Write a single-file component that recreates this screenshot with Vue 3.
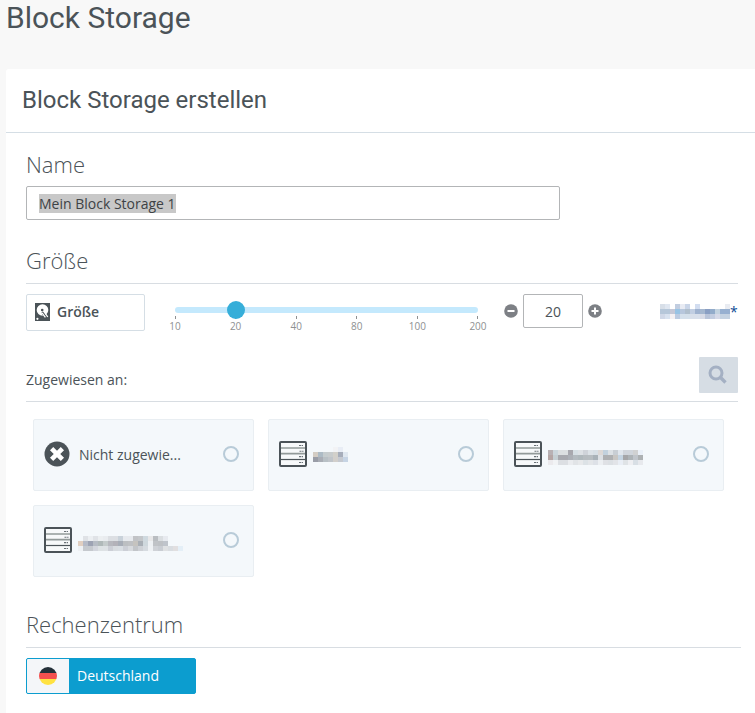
<script setup>
import { ref, computed } from 'vue'

const name = ref('Mein Block Storage 1')
const sizes = [10, 20, 40, 80, 100, 200]
const step = ref(1)
const size = computed(() => sizes[step.value])
const assigned = ref('')

function move(delta) {
  step.value = Math.min(sizes.length - 1, Math.max(0, Number(step.value) + delta))
}

// Masked labels: rows of 5px tiles, '-' leaves a tile empty.
function tiles(rows) {
  return rows.flatMap((row, y) =>
    row.split(' ').map((c, x) => ({ x: x * 5, y: y * 5, fill: '#' + c, empty: c === '-' }))
  ).filter((t) => !t.empty)
}

const price = tiles([
  'd8dfe8 e0e7f1 - c1cde0 e8ebf3 c9d5e8 - d2ddf0 - - - - - e9ecf2',
  'b6c7d9 b6c7d9 c5c8d7 98c3e4 b7c7dc b0bfcd c1cee2 9fb2cf a5b7cf 8a9fc3 93acca c3d3e0 97b0d0 97b0d0',
  'd0d8e7 d8e2ef f5f1f3 bccbe1 d4e0eb d4e0eb d8dfea d8dfeb d8dbe6 b9c4d9 c3cde0 d6dae8 c4d2e1 c4d2e1'
])

const servers = [
  {
    id: 's1',
    width: 35,
    height: 20,
    tiles: tiles([
      '- - - - f2f3f5 e8edf5 -',
      'd4cdc4 adbbc5 c5ccce c8cccd d2d0ca a6adba dfe7ef',
      '999da7 a9adb5 b8c0c5 c0c5ca d2cfcb c5c9d0 c6d4e4'
    ])
  },
  {
    id: 's2',
    width: 100,
    height: 15,
    tiles: tiles([
      'b8b1b4 cbd6dc dcdfe0 dcdfe0 a8a8ae d6dfe4 dde1e5 cfd3d9 dce2e7 d7dfe5 dcd8d6 c2d1dd dce1e5 c8ced4 e0e6ed d0d5dc d0d5dc d0d1d2 eaf0f8',
      'b5a6a5 c5cfd3 a8a9ae a8a9ae acb0b6 b4bbc0 afb8bc b6bcc0 b7bdc1 a9b2b8 dce0e4 aeb0b2 aeb0b2 c8c6c3 c4d4e2 a5a6a9 adb3b7 c0c5cb adb1b3 -',
      'ebeaed f1f3f5 dcdfe3 dcdfe3 eaecef e1e4e7 e7e9eb dce2e6 e3e6e9 dde1e7 eceff2 dfe1e5 dce0e4 e2e4e8 e9eef5 dfe3e6 eeeff2 d8dfe5 e7e9ed -'
    ])
  },
  {
    id: 's3',
    width: 105,
    height: 15,
    tiles: tiles([
      '- dfe2e6 eceff2 e0e3e7 eceff1 e9ecef dcdfe3 dcdfe3 c9d2da e7eaee e7eaee c1c3c6 c4c7ca cfd9df e8e8e9 b9bdc1 dadee1 e7eaef - - -',
      'e1cfc1 b6bbc7 9da3b3 b6bcc4 b0b9b9 c4cbcb b7b8be b3b2b9 a7adb7 bcbfc2 bfc1c4 c5c3bf a9afb6 cfd8dd eef1f4 c0c3c7 bec1c5 bfc4cb - - -',
      'eef1f4 c5c9ce c5c9ce d3d6dd dde2e4 dee2e5 cccfd6 d8dce0 d9dee3 cccfd6 d7dade c2c5c9 ced1d6 d6dbe0 eff2f5 cfd2d7 c9cdd3 dfe1e3 d9dde1 e1dfe0 e4eff7'
    ])
  }
]
</script>

<template>
  <div class="page">
    <h1>Block Storage</h1>
    <main class="panel">
      <header class="panel-head"><h2>Block Storage erstellen</h2></header>
      <form class="content" @submit.prevent>
        <section>
          <h3><label for="storage-name">Name</label></h3>
          <div class="name-box">
            <span class="selected-wrap">
              <input id="storage-name" v-model="name" class="name-input" type="text" />
            </span>
          </div>
        </section>

        <section class="size-section">
          <h3 class="ruled">Größe</h3>
          <div class="size-row">
            <label class="size-label" for="size-range">
              <svg width="15" height="18" viewBox="0 0 15 18" aria-hidden="true">
                <path fill="#4b5358" d="M0 0h15v18H0z" />
                <circle cx="7.5" cy="7" r="5.8" fill="#fff" />
                <circle cx="7.2" cy="7" r="1.3" fill="#4b5358" />
                <path fill="#4b5358" d="M6.6 9l1.4-.4 4 5.2-2.3 1.6-2.6-4z" />
                <path stroke="#fff" stroke-width="1.3" d="M7 9.8l3.4 4.6M10.4 10.6l2.4 3.4" />
                <circle cx="2.4" cy="15.8" r="1.1" fill="#fff" />
              </svg>
              <span>Größe</span>
            </label>
            <div class="slider">
              <div class="track">
                <input id="size-range" v-model.number="step" type="range" min="0" max="5" step="1" />
              </div>
              <ul class="ticks">
                <li v-for="s in sizes" :key="s">{{ s }}</li>
              </ul>
            </div>
            <div class="stepper">
              <button type="button" aria-label="Kleiner" @click="move(-1)">
                <svg width="14" height="14" viewBox="0 0 14 14"><circle cx="7" cy="7" r="6.8" fill="#7d8085" /><path stroke="#fff" stroke-width="2" d="M3.5 7h7" /></svg>
              </button>
              <input class="amount" type="text" :value="size" aria-label="Größe in GB" readonly />
              <button type="button" aria-label="Größer" @click="move(1)">
                <svg width="14" height="14" viewBox="0 0 14 14"><circle cx="7" cy="7" r="6.8" fill="#7d8085" /><path stroke="#fff" stroke-width="2" d="M3.5 7h7M7 3.5v7" /></svg>
              </button>
            </div>
            <div class="price">
              <svg width="70" height="15" viewBox="0 0 70 15" shape-rendering="crispEdges" aria-hidden="true">
                <rect v-for="(t, i) in price" :key="i" :x="t.x" :y="t.y" width="5" height="5" :fill="t.fill" />
              </svg>
              <span>*</span>
            </div>
          </div>
        </section>

        <section>
          <div class="assign-head">
            <p>Zugewiesen an:</p>
            <button class="search" type="button" aria-label="Suchen">
              <svg width="20" height="20" viewBox="0 0 20 20" fill="none" stroke="#a4b0c3">
                <circle cx="8" cy="8" r="6" stroke-width="3" />
                <path d="M12.3 12.3l5.2 5.2" stroke-width="3.4" />
              </svg>
            </button>
          </div>
          <div class="cards">
            <label class="card">
              <svg width="26" height="26" viewBox="0 0 26 26" aria-hidden="true">
                <circle cx="13" cy="13" r="12.5" fill="#4b5358" />
                <path stroke="#fff" stroke-width="4.6" d="M7.6 7.6l10.8 10.8M18.4 7.6L7.6 18.4" />
              </svg>
              <span class="card-text">Nicht zugewie...</span>
              <input v-model="assigned" type="radio" name="server" value="none" />
            </label>
            <label v-for="s in servers" :key="s.id" class="card">
              <svg class="server-icon" width="28" height="26" viewBox="0 0 28 26" aria-hidden="true">
                <rect x="1" y="1" width="26" height="24" rx="1" fill="#f7f9fa" stroke="#4b5358" stroke-width="2" />
                <path stroke="#929a99" stroke-width="1.6" d="M2 7h24M2 12.6h24" />
                <path stroke="#4b5358" stroke-width="1.2" d="M2 18.5h24" />
                <path stroke="#6b7378" stroke-width="1.1" stroke-dasharray="2 .6 1.4" d="M20 4.5h4M20.5 10.2h4M20 15.6h4M20 21.5h4" />
              </svg>
              <span class="mask">
                <svg :width="s.width" :height="s.height" shape-rendering="crispEdges" aria-hidden="true">
                  <rect v-for="(t, i) in s.tiles" :key="i" :x="t.x" :y="t.y" width="5" height="5" :fill="t.fill" />
                </svg>
              </span>
              <input v-model="assigned" type="radio" name="server" :value="s.id" />
            </label>
          </div>
        </section>

        <section class="center-section">
          <h3 class="ruled wide">Rechenzentrum</h3>
          <button type="button" class="country">
            <span class="flag">
              <svg width="18" height="18" viewBox="0 0 18 18" aria-hidden="true">
                <clipPath id="flag-round"><circle cx="9" cy="9" r="9" /></clipPath>
                <g clip-path="url(#flag-round)">
                  <path fill="#243039" d="M0 0h18v6H0z" />
                  <path fill="#f4504f" d="M0 6h18v6H0z" />
                  <path fill="#ffe242" d="M0 12h18v6H0z" />
                </g>
              </svg>
            </span>
            <span class="country-name">Deutschland</span>
          </button>
        </section>
      </form>
    </main>
  </div>
</template>

<style>
body {
  background: #f8f8f8;
}
</style>

<style scoped>
* {
  box-sizing: border-box;
}
.page {
  padding-left: 6px;
  font-family: "Open Sans", "Noto Sans", sans-serif;
  font-size: 14px;
  line-height: 20px;
  color: #4b5358;
}
h1,
h2,
h3,
p,
ul {
  margin: 0;
  padding: 0;
  font-weight: 400;
}
h1 {
  height: 69px;
  font-family: Roboto, sans-serif;
  font-size: 30px;
  line-height: 36px;
}
.panel {
  background: #fff;
  border-radius: 3px 0 0 0;
  padding-bottom: 20px;
}
.panel-head {
  padding: 15px 16px 16px;
  border-bottom: 1px solid #d5dee5;
}
h2 {
  font-family: Roboto, sans-serif;
  font-size: 24px;
  line-height: 32px;
}
.content {
  padding: 15px 17px 0 20px;
}
h3 {
  font-size: 22px;
  font-weight: 350;
  line-height: 32px;
}
.name-box {
  display: flex;
  align-items: center;
  width: 75%;
  height: 34px;
  margin-top: 6px;
  padding: 1px 12px 0;
  border: 1px solid #b3b5b7;
  border-radius: 2px;
}
.selected-wrap {
  display: flex;
  background: #c8c8c8;
}
.name-input {
  field-sizing: content;
  height: 19px;
  padding: 0;
  border: 0;
  outline: 0;
  background: transparent;
  font: inherit;
  color: #3d4245;
}
.size-section {
  margin-top: 24px;
}
.ruled {
  padding-bottom: 7px;
  border-bottom: 1px solid #d8dde2;
}
.wide {
  margin-right: -3px;
}
.size-row {
  display: flex;
  align-items: flex-start;
  padding-top: 10px;
}
.size-label {
  display: flex;
  align-items: center;
  gap: 7px;
  width: 119px;
  height: 37px;
  padding: 0 0 1px 8px;
  border: 1px solid #d5dee5;
  border-radius: 2px;
  font-weight: 600;
}
.slider {
  flex: 1;
  margin: 13px 26px 0 30px;
}
.track {
  height: 6px;
  border-radius: 3px;
  background: #c4e9fd;
}
.track input {
  display: block;
  appearance: none;
  width: calc(100% + 18px);
  height: 18px;
  margin: 0 -9px;
  background: transparent;
  position: relative;
  top: -6px;
}
.track input::-webkit-slider-thumb {
  appearance: none;
  width: 18px;
  height: 18px;
  border-radius: 50%;
  background: #36aed9;
}
.ticks {
  display: flex;
  justify-content: space-between;
  margin: 3px -15px 0;
  list-style: none;
  font-size: 10px;
  line-height: 14px;
  color: #8e9091;
}
.ticks li {
  width: 30px;
  text-align: center;
}
.ticks li::before {
  content: "";
  display: block;
  width: 1px;
  height: 3px;
  margin: 0 auto;
  background: #8e9091;
}
.stepper {
  display: flex;
  align-items: center;
  gap: 5px;
}
.stepper button {
  display: flex;
  padding: 0;
  border: 0;
  background: none;
}
.amount {
  width: 60px;
  height: 34px;
  padding: 0;
  border: 1px solid #b3b5b7;
  border-radius: 2px;
  font: inherit;
  color: #4b5358;
  text-align: center;
}
.price {
  display: flex;
  align-items: center;
  height: 35px;
  margin-left: 58px;
  color: #0b4a94;
}
.price span {
  width: 8px;
}
.assign-head {
  display: flex;
  justify-content: space-between;
  align-items: flex-end;
  margin-top: 24px;
  padding-bottom: 8px;
  border-bottom: 1px solid #d8dde2;
}
.assign-head p {
  padding-bottom: 3px;
}
.search {
  display: flex;
  align-items: center;
  justify-content: center;
  width: 39px;
  height: 36px;
  padding: 0 2px 0 0;
  border: 0;
  border-radius: 1px;
  background: #d6dde4;
}
.cards {
  display: grid;
  grid-template-columns: repeat(3, minmax(0, 1fr));
  gap: 14px;
  padding: 17px 14px 0 7px;
}
.card {
  display: flex;
  align-items: center;
  height: 72px;
  padding: 0 14px 2px 10px;
  border: 1px solid #e9eef2;
  border-radius: 2px;
  background: #f4f8fb;
}
.card-text {
  margin-left: 9px;
  padding-top: 2px;
  white-space: nowrap;
  font-weight: 500;
}
.server-icon {
  margin-right: 6px;
}
.mask {
  display: flex;
  padding-top: 6px;
}
.card input {
  appearance: none;
  width: 16px;
  height: 16px;
  margin: 0 0 0 auto;
  border: 2px solid #b8cbd8;
  border-radius: 50%;
}
.center-section {
  margin-top: 31px;
}
.country {
  display: flex;
  width: 170px;
  height: 36px;
  margin-top: 10px;
  padding: 0;
  overflow: hidden;
  border: 1px solid #0c9dcf;
  border-radius: 2px;
  background: #0c9dcf;
  font: inherit;
  font-weight: 500;
  color: #fff;
}
.flag {
  display: flex;
  align-items: center;
  justify-content: center;
  width: 42px;
  height: 34px;
  background: #f4f6f9;
}
.country-name {
  padding: 7px 8px;
}
</style>
